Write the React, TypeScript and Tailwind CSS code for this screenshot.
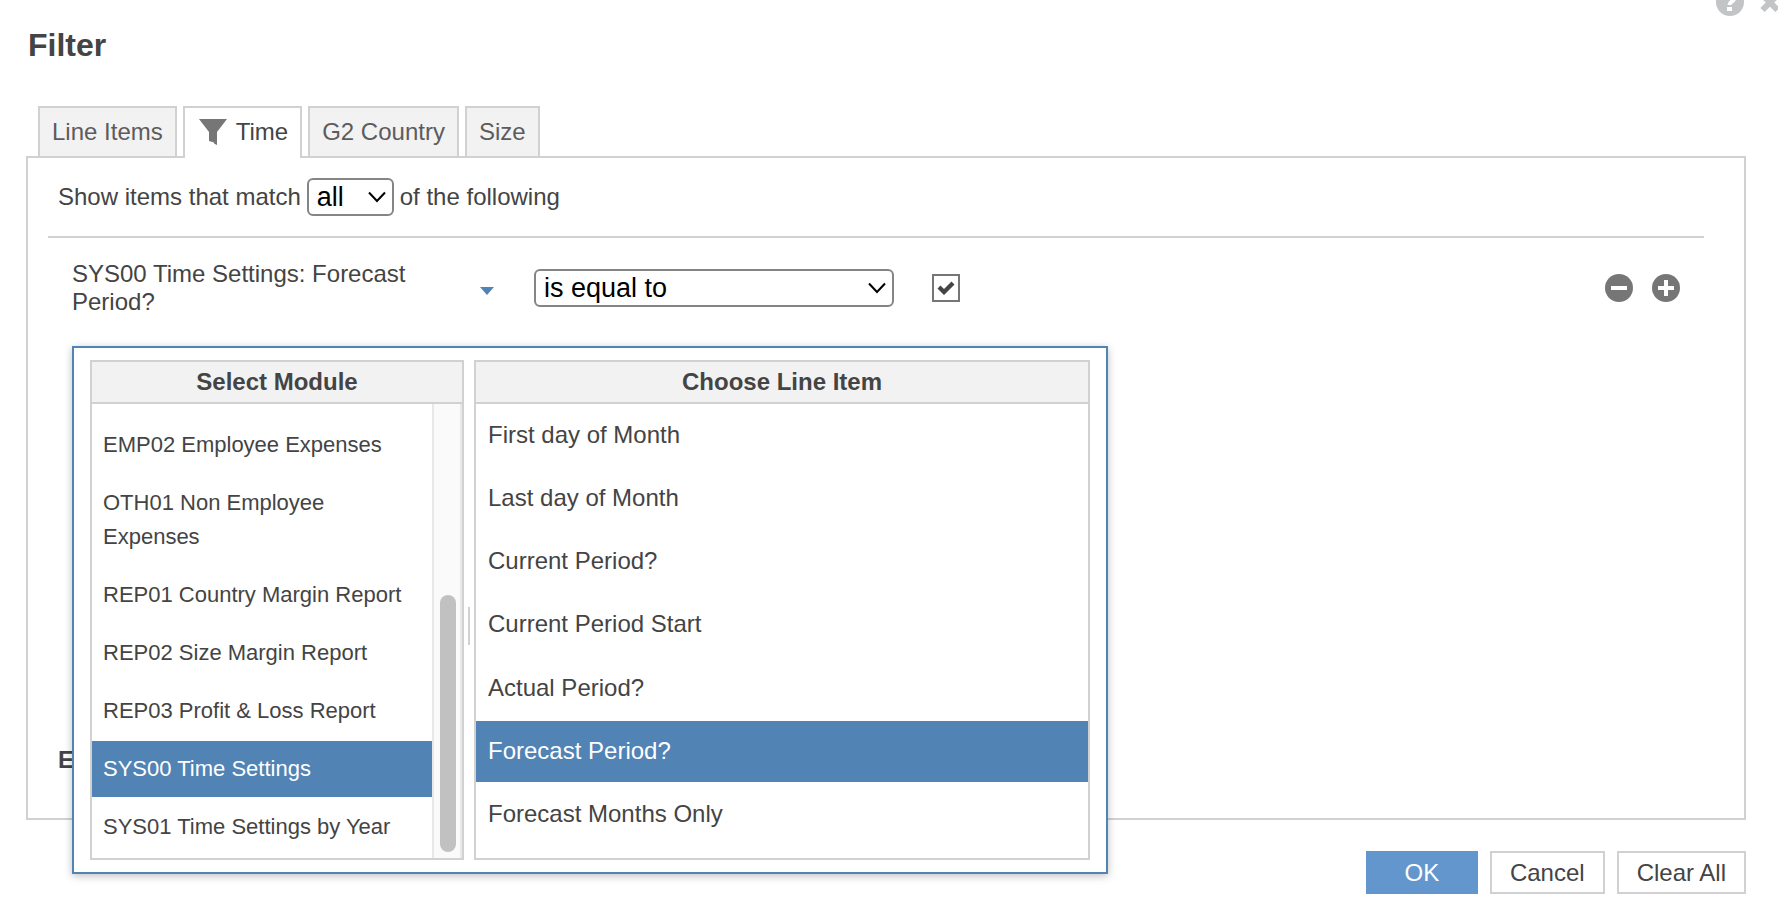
import { useState } from 'react';

const tabs = ['Line Items', 'Time', 'G2 Country', 'Size'];

const modules = [
  'EMP02 Employee Expenses',
  'OTH01 Non Employee Expenses',
  'REP01 Country Margin Report',
  'REP02 Size Margin Report',
  'REP03 Profit & Loss Report',
  'SYS00 Time Settings',
  'SYS01 Time Settings by Year',
];

const lineItems = [
  'First day of Month',
  'Last day of Month',
  'Current Period?',
  'Current Period Start',
  'Actual Period?',
  'Forecast Period?',
  'Forecast Months Only',
];

function FunnelIcon() {
  return (
    <svg width="28" height="26" viewBox="0 0 28 26" fill="#767676" aria-hidden="true">
      <path d="M0 0h28L18 13v13l-3-1.500v-1l-5-1.500V13z" />
    </svg>
  );
}

function Chevron() {
  return (
    <svg
      className="absolute right-2 top-3 pointer-events-none"
      width="18"
      height="14"
      viewBox="0 0 18 14"
      fill="none"
      stroke="#000"
      strokeWidth="2"
      aria-hidden="true"
    >
      <path d="M1 2.500l8 8.500 8-8.500" />
    </svg>
  );
}

function Select({ label, options, width }: { label: string; options: string[]; width: string }) {
  return (
    <span className={`relative shrink-0 ${width}`}>
      <select
        aria-label={label}
        className="block w-full h-[38px] pl-2 appearance-none border-2 border-[#858585] rounded-md bg-white text-[27px] leading-8 text-black"
      >
        {options.map((option) => (
          <option key={option}>{option}</option>
        ))}
      </select>
      <Chevron />
    </span>
  );
}

export default function App() {
  const [activeTab, setActiveTab] = useState('Time');
  const [module, setModule] = useState('SYS00 Time Settings');
  const [lineItem, setLineItem] = useState('Forecast Period?');
  const [checked, setChecked] = useState(true);

  return (
    <div className="relative overflow-hidden bg-white font-['Liberation_Sans',Arial,sans-serif] text-2xl leading-7 text-[#444] pt-[25px] pb-4 pl-[26px] pr-8">
      <div className="absolute -top-3 -right-[6px] flex gap-4">
        <button type="button" aria-label="Help">
          <svg width="28" height="28" viewBox="0 0 28 28" aria-hidden="true">
            <circle cx="14" cy="14" r="14" fill="#c3c4c6" />
            <path d="M9.500 10a4.500 4.500 0 1 1 7 3c-2 1.200-3 2-3 4" fill="none" stroke="#fff" strokeWidth="4" />
            <rect x="11" y="19" width="5" height="4" fill="#fff" />
          </svg>
        </button>
        <button type="button" aria-label="Close">
          <svg width="24" height="28" viewBox="0 0 24 28" stroke="#c3c4c6" strokeWidth="6" aria-hidden="true">
            <path d="M2.500 7l15 15M17.500 7l-15 15" />
          </svg>
        </button>
      </div>

      <h1 className="ml-[2px] text-[32px] leading-10 font-bold">Filter</h1>

      <div role="tablist" className="flex gap-[6px] mt-[41px] ml-3">
        {tabs.map((tab) => (
          <button
            key={tab}
            type="button"
            role="tab"
            aria-selected={tab === activeTab}
            onClick={() => setActiveTab(tab)}
            className={`relative flex items-center gap-[9px] border-2 border-b-0 border-[#d1d1d1] px-3 ${
              tab === activeTab
                ? 'z-10 h-[52px] -mb-[2px] pb-[2px] pl-[14px] bg-white text-[#444]'
                : 'h-[50px] bg-[#f2f2f2] text-[#5c5c5c]'
            }`}
          >
            {tab === 'Time' && <FunnelIcon />}
            {tab}
          </button>
        ))}
      </div>

      <section className="relative h-[664px] border-2 border-[#d1d1d1] pt-5 pl-5 pr-10">
        <div className="flex items-center gap-[6px] pl-[10px] h-[38px]">
          <span>Show items that match</span>
          <Select label="Match" options={['all', 'any']} width="w-[87px]" />
          <span>of the following</span>
        </div>

        <div className="mt-5 border-t-2 border-[#d1d1d1]" />

        <div className="flex items-center pl-6 pr-6 pt-[22px]">
          <button type="button" className="flex items-center justify-between w-[422px] text-left">
            <span className="w-[350px]">SYS00 Time Settings: Forecast Period?</span>
            <svg width="14" height="14" viewBox="0 0 14 14" fill="#5183b5" aria-hidden="true">
              <path d="M0 6h14l-7 8z" />
            </svg>
          </button>
          <div className="flex items-center ml-10">
            <Select
              label="Condition"
              options={['is equal to', 'is not equal to']}
              width="w-[360px]"
            />
            <label className="relative ml-[38px] size-7">
              <input
                type="checkbox"
                aria-label="Value"
                checked={checked}
                onChange={(e) => setChecked(e.target.checked)}
                className="block size-7 appearance-none border-2 border-[#767676] bg-white"
              />
              {checked && (
                <svg
                  className="absolute inset-0 pointer-events-none"
                  width="28"
                  height="28"
                  viewBox="0 0 28 28"
                  fill="#444"
                  aria-hidden="true"
                >
                  <path d="M5.500 14.500l3-3 3.500 3.500 7.500-7.500 3 3L12 21z" />
                </svg>
              )}
            </label>
          </div>
          <div className="flex gap-[19px] ml-auto">
            <button type="button" aria-label="Remove condition">
              <svg width="28" height="28" viewBox="0 0 28 28" aria-hidden="true">
                <circle cx="14" cy="14" r="14" fill="#767676" />
                <path d="M6 14h16" stroke="#fff" strokeWidth="4" />
              </svg>
            </button>
            <button type="button" aria-label="Add condition">
              <svg width="28" height="28" viewBox="0 0 28 28" aria-hidden="true">
                <circle cx="14" cy="14" r="14" fill="#767676" />
                <path d="M6 14h16M14 6v16" stroke="#fff" strokeWidth="4" />
              </svg>
            </button>
          </div>
        </div>

        <h2 className="absolute bottom-11 left-[30px] font-bold">E</h2>

        {/* module / line item picker */}
        <div className="absolute top-[188px] left-11 flex w-[1036px] h-[528px] border-2 border-[#5183b5] bg-white pt-3 pb-3 px-4 shadow-[0_2px_8px_rgba(0,0,0,0.25)]">
          <div className="flex flex-col w-[374px] border-2 border-[#d1d1d1]">
            <h3 className="h-[42px] shrink-0 border-b-2 border-[#d1d1d1] bg-[#f2f2f2] text-center font-bold leading-10">
              Select Module
            </h3>
            <div className="flex flex-1">
              <ul className="flex flex-1 flex-col gap-[2px] pt-[13px] text-[22px] leading-[34px]">
                {modules.map((name) => (
                  <li key={name}>
                    <button
                      type="button"
                      onClick={() => setModule(name)}
                      className={`block w-full py-[11px] pl-[11px] pr-4 text-left ${
                        name === module ? 'bg-[#5183b5] text-white' : ''
                      }`}
                    >
                      {name}
                    </button>
                  </li>
                ))}
              </ul>
              <div className="flex flex-col justify-end w-[30px] border-x-2 border-[#e8e8e8] bg-[#fafafa] px-[6px] pb-[6px]">
                <div className="w-4 h-[257px] rounded-full bg-[#c1c1c1]" />
              </div>
            </div>
          </div>

          <div className="flex items-center justify-center w-[10px]">
            <div className="w-[2px] h-[38px] mt-8 bg-[#d1d1d1]" />
          </div>

          <div className="flex flex-col flex-1 border-2 border-[#d1d1d1]">
            <h3 className="h-[42px] shrink-0 border-b-2 border-[#d1d1d1] bg-[#f2f2f2] text-center font-bold leading-10">
              Choose Line Item
            </h3>
            <ul className="flex flex-col justify-between h-[441px]">
              {lineItems.map((name) => (
                <li key={name}>
                  <button
                    type="button"
                    onClick={() => setLineItem(name)}
                    className={`block w-full h-[61px] px-3 text-left ${
                      name === lineItem ? 'bg-[#5183b5] text-white' : ''
                    }`}
                  >
                    {name}
                  </button>
                </li>
              ))}
            </ul>
          </div>
        </div>
      </section>

      <div className="flex justify-end gap-3 mt-[31px]">
        <button type="button" className="w-28 h-[43px] bg-[#6296cc] text-white">
          OK
        </button>
        <button type="button" className="h-[43px] border-2 border-[#d1d1d1] bg-white px-[18px]">
          Cancel
        </button>
        <button type="button" className="h-[43px] border-2 border-[#d1d1d1] bg-white px-[18px]">
          Clear All
        </button>
      </div>
    </div>
  );
}
